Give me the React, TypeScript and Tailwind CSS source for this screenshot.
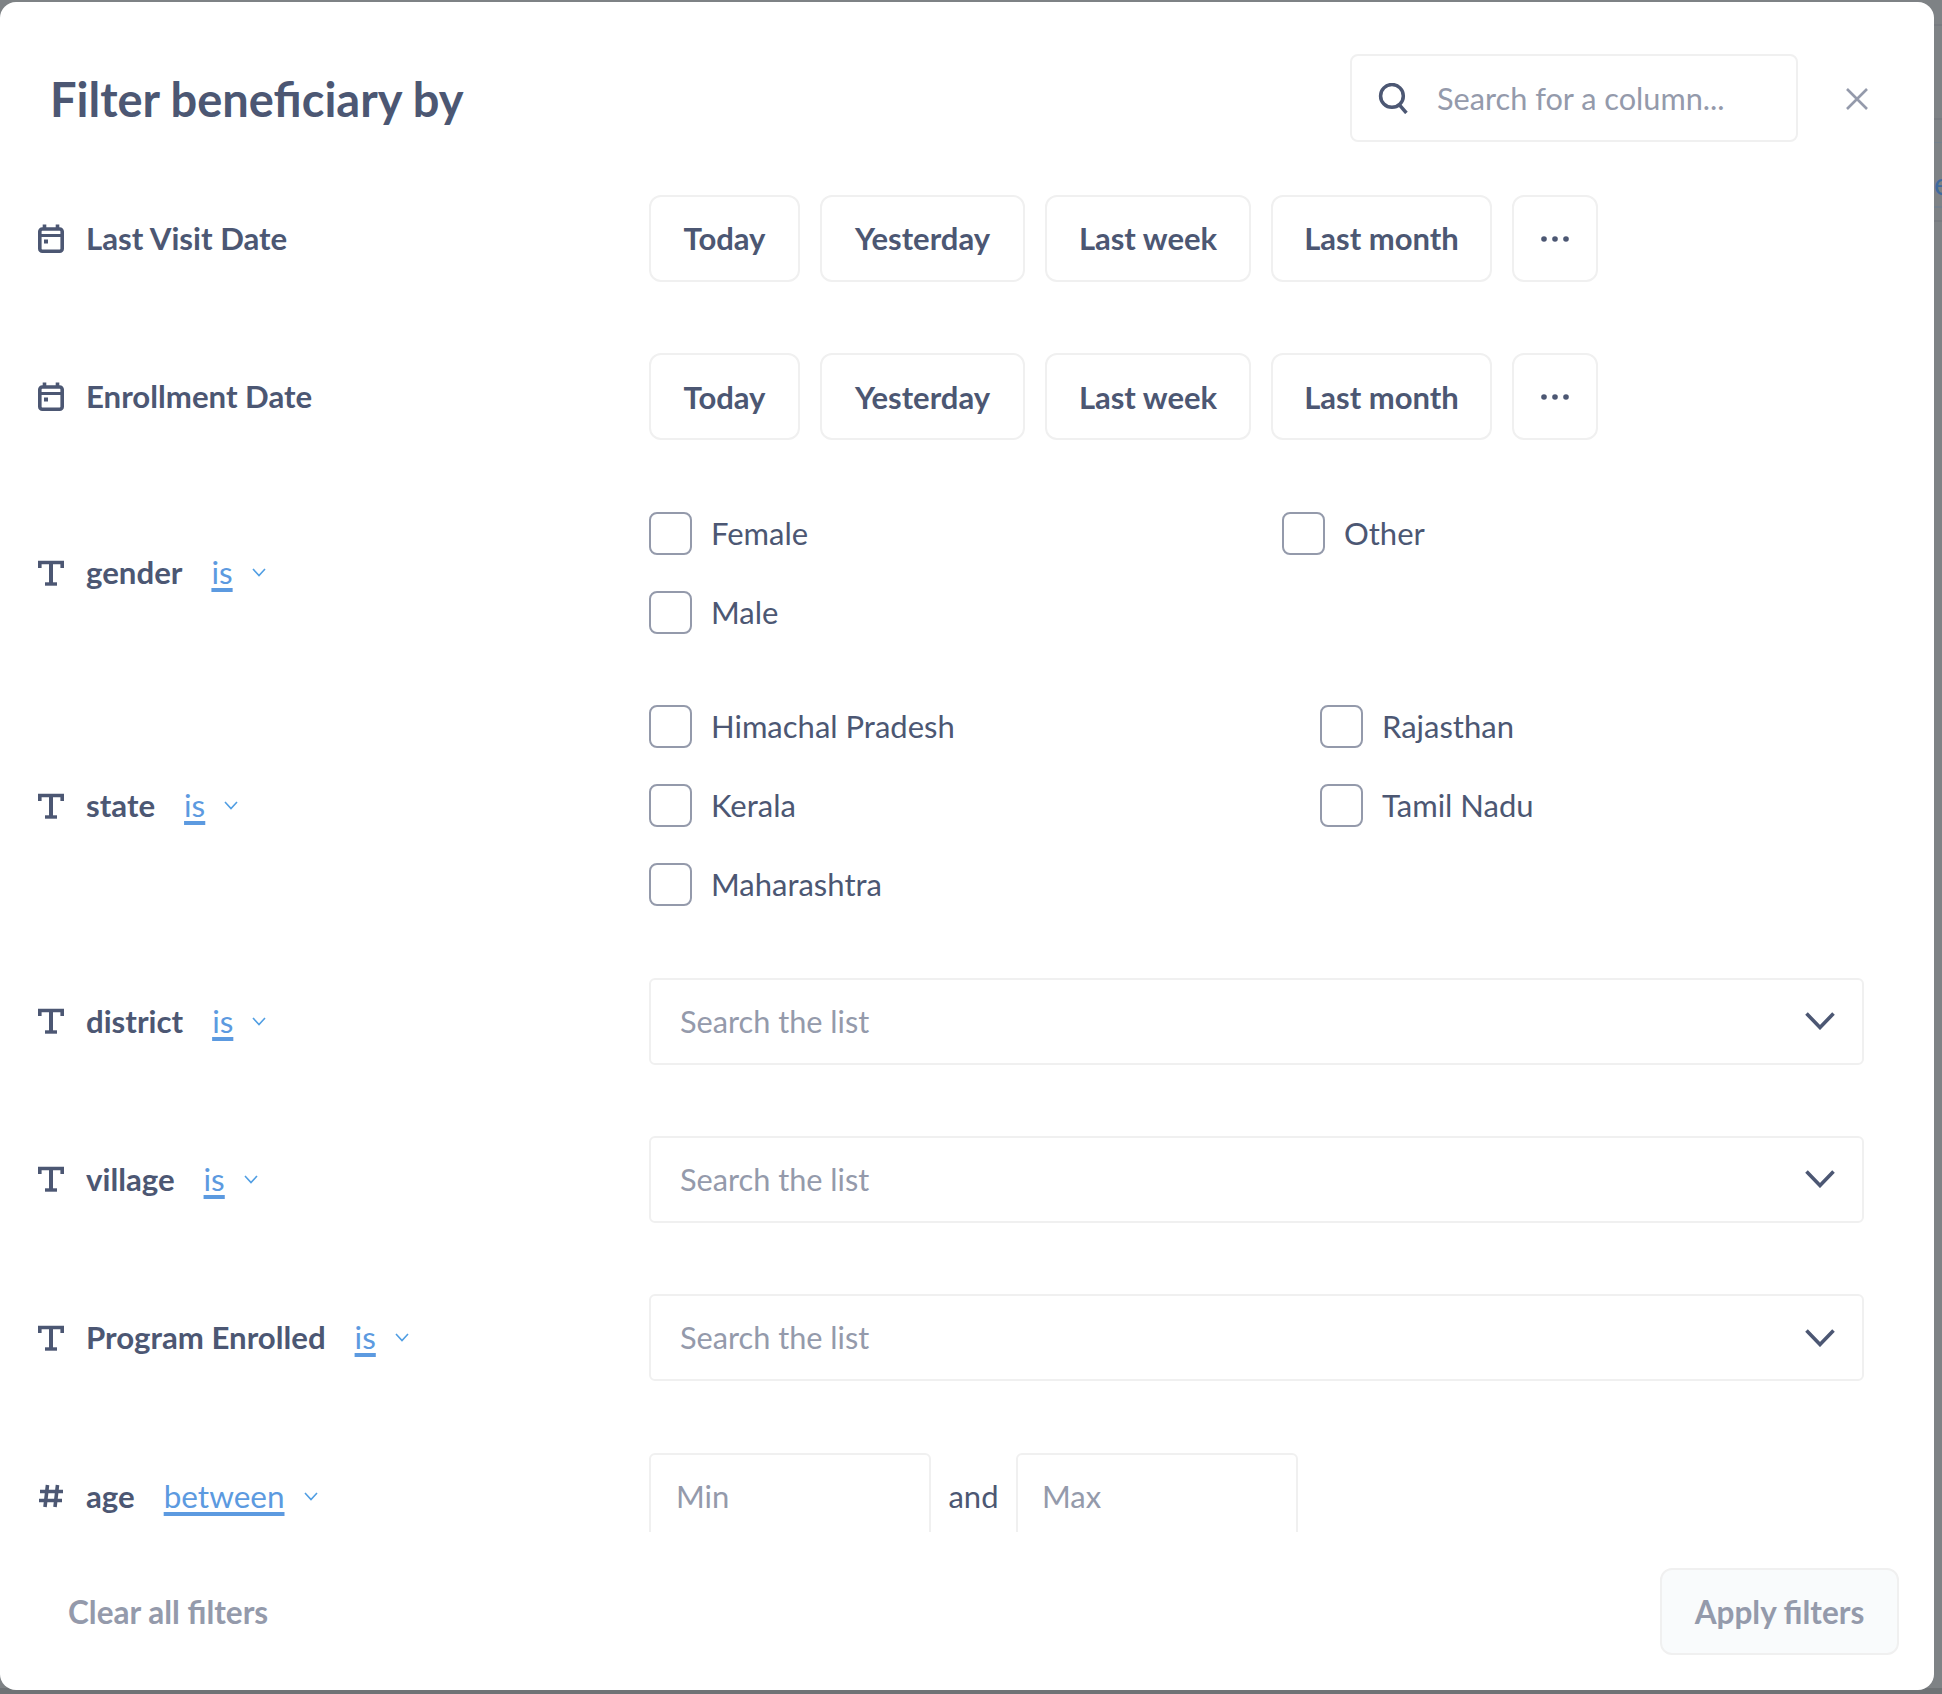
import { ReactNode } from "react";

const CalendarIcon = () => (
  <svg width="26" height="29" viewBox="0 0 26 29" fill="none" className="shrink-0">
    <rect x="1.8" y="5" width="22.4" height="22.2" rx="2.5" stroke="#4c5773" strokeWidth="3.6" />
    <path d="M2 11.5h22" stroke="#4c5773" strokeWidth="3" />
    <path d="M6.5 0.5v5M19.5 0.5v5" stroke="#4c5773" strokeWidth="3.6" />
    <rect x="6" y="15.5" width="4" height="4" fill="#4c5773" />
  </svg>
);

const TextIcon = () => (
  <svg width="26" height="26" viewBox="0 0 26 26" fill="none" className="shrink-0">
    <path d="M1.8 8V2.5h22.4V8" stroke="#4c5773" strokeWidth="3.6" />
    <path d="M13 2v22" stroke="#4c5773" strokeWidth="4" />
    <path d="M7 24h12" stroke="#4c5773" strokeWidth="3.4" />
  </svg>
);

const NumberIcon = () => (
  <svg width="26" height="26" viewBox="0 0 26 26" fill="none" className="shrink-0">
    <path d="M9.5 2L7 24M19.5 2L17 24M2 8.5h23M1 17.5h23" stroke="#4c5773" strokeWidth="3.6" />
  </svg>
);

const SmallChevron = () => (
  <svg width="14" height="9" viewBox="0 0 14 9" fill="none" className="shrink-0">
    <path d="M1 1l6 6.5L13 1" stroke="#509ee3" strokeWidth="1.6" />
  </svg>
);

const Label = ({ icon, name, op }: { icon: ReactNode; name: string; op?: string }) => (
  <div className="flex items-center">
    <div className="w-[49px] flex pl-[1px]">{icon}</div>
    <span className="pb-[1px] text-[31.2px] leading-[40px] font-bold text-[#4c5773]">{name}</span>
    {op && (
      <>
        <span className="ml-[29px] pb-[1px] text-[31.5px] leading-[40px] text-[#5c9ae0] underline decoration-[4px] underline-offset-[4px]">
          {op}
        </span>
        <span className="ml-[19px]">
          <SmallChevron />
        </span>
      </>
    )}
  </div>
);

const Row = ({ label, children }: { label: ReactNode; children: ReactNode }) => (
  <div className="flex items-center">
    <div className="w-[612px] shrink-0">{label}</div>
    <div className="flex-1">{children}</div>
  </div>
);

const quickDates = [
  { text: "Today", width: "w-[151px]" },
  { text: "Yesterday", width: "w-[205px]" },
  { text: "Last week", width: "w-[206px]" },
  { text: "Last month", width: "w-[221px]" },
];

const QuickDates = () => (
  <div className="flex gap-[20px]">
    {quickDates.map((d) => (
      <button
        key={d.text}
        className={`${d.width} h-[87px] rounded-[12px] border-2 border-[#f0f0f0] bg-white text-[31px] font-bold text-[#4c5773]`}
      >
        {d.text}
      </button>
    ))}
    <button className="h-[87px] w-[86px] rounded-[12px] border-2 border-[#f0f0f0] bg-white flex items-center justify-center">
      <svg width="28" height="6" viewBox="0 0 28 6" fill="#4c5773">
        <circle cx="3" cy="3" r="2.8" />
        <circle cx="14" cy="3" r="2.8" />
        <circle cx="25" cy="3" r="2.8" />
      </svg>
    </button>
  </div>
);

const Check = ({ label }: { label: string }) => (
  <label className="flex items-center h-[43px]">
    <span className="w-[43px] h-[43px] rounded-[8px] border-2 border-[#949aab] bg-white shrink-0" />
    <span className="ml-[19px] text-[31px] text-[#4c5773]">{label}</span>
  </label>
);

const SearchList = () => (
  <div className="h-[87px] rounded-[6px] border-2 border-[#f0f0f0] flex items-center justify-between pl-[29px] pr-[27px]">
    <span className="pt-[1px] text-[30.7px] text-[#949aab]">Search the list</span>
    <svg width="30" height="18" viewBox="0 0 30 18" fill="none">
      <path d="M1.5 1.5L15 15.5L28.5 1.5" stroke="#4c5773" strokeWidth="3.6" />
    </svg>
  </div>
);

const App = () => {
  return (
    <div className="relative w-[1942px] h-[1694px] overflow-hidden bg-[#7e8285] pt-[2px] font-['Lato',sans-serif]">
      {/* page behind the overlay, only the edges show */}
      <div className="absolute right-0 top-[24px] w-[8px] h-[2px] bg-[#777b80]" />
      <div className="absolute right-0 top-[118px] w-[8px] h-[2px] bg-[#777b80]" />
      <div className="absolute right-0 top-[142px] w-[8px] h-[1px] bg-[#74808c]" />
      <div className="absolute right-0 top-[206px] w-[8px] h-[2px] bg-[#74808c]" />
      <div className="absolute right-0 top-[220px] w-[8px] h-[2px] bg-[#777b80]" />
      <span className="absolute left-[1934px] top-[165px] text-[30px] leading-[36px] text-[#3f6a9e]">e</span>
      <div className="absolute left-0 right-0 top-[1688px] h-[6px] bg-[#6f7376]" />
      <div className="absolute left-0 top-[1689px] w-full h-[5px] overflow-hidden text-[#33373c] text-[24px] leading-[30px]">
        <span className="absolute left-[142px] top-0 whitespace-nowrap">AMAR RAJ PRATAP KUMAR SHARMA PURI</span>
        <span className="absolute left-[811px] top-0">AMRAVATI</span>
        <span className="absolute left-[1008px] top-0">Rajasthan</span>
        <span className="absolute left-[1278px] top-0">Dhanbad</span>
        <span className="absolute left-[1505px] top-0">Kishan</span>
        <span className="absolute left-[1725px] top-0">Dairy</span>
      </div>

      <div className="relative w-[1934px] h-[1688px] bg-white rounded-[16px] flex flex-col">
        <div className="h-[193px] shrink-0 flex items-start">
          <h1 className="ml-[50px] mt-[70px] text-[47px] leading-[54px] font-bold text-[#4c5773]">
            Filter beneficiary by
          </h1>
          <div className="ml-auto mt-[52px] w-[448px] h-[88px] rounded-[8px] border-2 border-[#f0f0f0] flex items-center pl-[26px]">
            <svg width="31" height="31" viewBox="0 0 30 30" fill="none" className="shrink-0">
              <circle cx="13.5" cy="12.5" r="11" stroke="#4c5773" strokeWidth="3.4" />
              <path d="M20.5 21l7 8" stroke="#4c5773" strokeWidth="3.4" />
            </svg>
            <span className="ml-[28px] pt-[2px] text-[30.7px] text-[#949aab]">Search for a column...</span>
          </div>
          <div className="ml-[48px] mr-[66px] mt-[86px]">
            <svg width="22" height="22" viewBox="0 0 22 22" fill="none">
              <path d="M1 1l20 20M21 1L1 21" stroke="#949aab" strokeWidth="2.6" />
            </svg>
          </div>
        </div>

        <div className="flex-1 min-h-0 overflow-hidden pl-[37px] pr-[70px] flex flex-col gap-[71.4px]">
          <Row label={<Label icon={<CalendarIcon />} name="Last Visit Date" />}>
            <QuickDates />
          </Row>
          <Row label={<Label icon={<CalendarIcon />} name="Enrollment Date" />}>
            <QuickDates />
          </Row>
          <Row label={<Label icon={<TextIcon />} name="gender" op="is" />}>
            <div className="grid grid-cols-[633px_1fr] gap-y-[36px]">
              <Check label="Female" />
              <Check label="Other" />
              <Check label="Male" />
            </div>
          </Row>
          <Row label={<Label icon={<TextIcon />} name="state" op="is" />}>
            <div className="grid grid-cols-[671px_1fr] gap-y-[36px]">
              <Check label="Himachal Pradesh" />
              <Check label="Rajasthan" />
              <Check label="Kerala" />
              <Check label="Tamil Nadu" />
              <Check label="Maharashtra" />
            </div>
          </Row>
          <Row label={<Label icon={<TextIcon />} name="district" op="is" />}>
            <SearchList />
          </Row>
          <Row label={<Label icon={<TextIcon />} name="village" op="is" />}>
            <SearchList />
          </Row>
          <Row label={<Label icon={<TextIcon />} name="Program Enrolled" op="is" />}>
            <SearchList />
          </Row>
          <Row label={<Label icon={<NumberIcon />} name="age" op="between" />}>
            <div className="flex items-center">
              <div className="w-[282px] h-[87px] rounded-[6px] border-2 border-[#f0f0f0] flex items-center pl-[25px] text-[31px] text-[#949aab]">
                Min
              </div>
              <span className="w-[85px] text-center text-[31px] text-[#4c5773]">and</span>
              <div className="w-[282px] h-[87px] rounded-[6px] border-2 border-[#f0f0f0] flex items-center pl-[24px] text-[31px] text-[#949aab]">
                Max
              </div>
            </div>
          </Row>
        </div>

        <div className="h-[158px] shrink-0 flex items-center justify-between pl-[68px] pr-[35px]">
          <span className="pt-[3px] text-[31.5px] font-bold text-[#949aab]">Clear all filters</span>
          <button className="w-[239px] h-[87px] pt-[3px] rounded-[12px] border-2 border-[#f0f0f0] bg-[#f9fbfc] text-[31.5px] font-bold text-[#949aab]">
            Apply filters
          </button>
        </div>
      </div>
    </div>
  );
};

export default App;
